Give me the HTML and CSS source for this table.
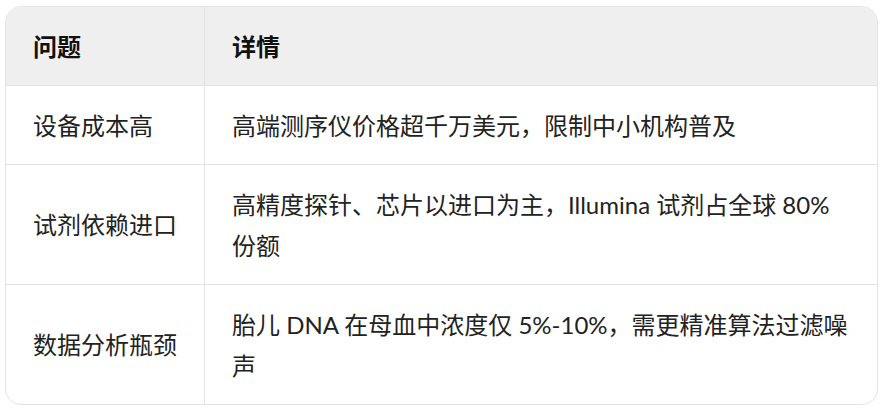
FILE: index.html
```html
<!DOCTYPE html>
<html lang="zh-CN">
<head>
<meta charset="utf-8">
<link rel="stylesheet" href="styles.css">
</head>
<body>
<div class="table-wrap">
  <table class="data-table">
    <thead>
      <tr>
        <th class="col-issue">问题</th>
        <th>详情</th>
      </tr>
    </thead>
    <tbody>
      <tr>
        <td class="col-issue">设备成本高</td>
        <td>高端测序仪价格超千万美元，限制中小机构普及</td>
      </tr>
      <tr>
        <td class="col-issue">试剂依赖进口</td>
        <td>高精度探针、芯片以进口为主，Illumina 试剂占全球 80% 份额</td>
      </tr>
      <tr>
        <td class="col-issue">数据分析瓶颈</td>
        <td>胎儿 DNA 在母血中浓度仅 5%-10%，需更精准算法过滤噪声</td>
      </tr>
    </tbody>
  </table>
</div>
</body>
</html>
```
FILE: styles.css
```css
html, body {
  margin: 0;
  padding: 0;
  background: #ffffff;
}

body {
  padding: 6px 0 0 5px;
  font-family: "Lato", "Noto Sans CJK SC", sans-serif;
  color: #222222;
}

.table-wrap {
  width: 873px;
  box-sizing: border-box;
  border: 1px solid #e4e4e4;
  border-radius: 16px;
  overflow: hidden;
}

.data-table {
  width: 100%;
  border-collapse: separate;
  border-spacing: 0;
  table-layout: fixed;
  font-size: 24px;
  line-height: 41px;
}

.data-table th,
.data-table td {
  box-sizing: border-box;
  padding: 18.5px 27px;
  text-align: left;
  vertical-align: middle;
  border-bottom: 1px solid #e4e4e4;
}

.data-table tbody tr:last-child td {
  border-bottom: none;
}

.data-table .col-issue {
  width: 199px;
  border-right: 1px solid #e4e4e4;
}

.data-table th {
  background: #efefef;
  font-weight: 700;
  color: #111111;
}
```
